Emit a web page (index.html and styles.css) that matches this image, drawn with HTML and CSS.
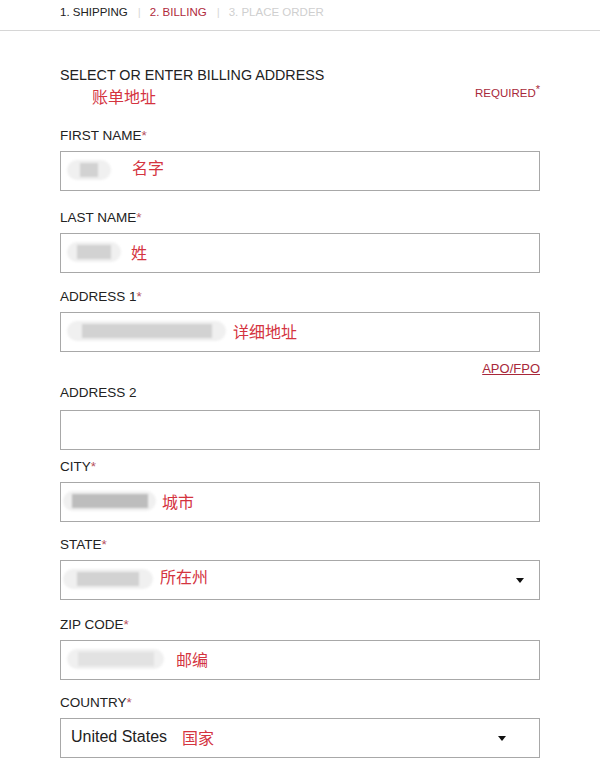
FILE: index.html
```html
<!DOCTYPE html>
<html lang="en">
<head>
    <meta charset="UTF-8">
    <meta name="viewport" content="width=device-width, initial-scale=1.0">
    <title>Billing</title>
    <link rel="stylesheet" href="styles.css">
</head>
<body>
    <div class="steps">
        <span class="step done">1. SHIPPING</span>
        <span class="sep">|</span>
        <span class="step active">2. BILLING</span>
        <span class="sep">|</span>
        <span class="step todo">3. PLACE ORDER</span>
    </div>

    <div class="form">
        <div class="heading">
            <div>
                <div class="title">SELECT OR ENTER BILLING ADDRESS</div>
                <div class="note title-note">账单地址</div>
            </div>
            <div class="required">REQUIRED<sup>*</sup></div>
        </div>

        <div class="field f-first">
            <label>FIRST NAME<span class="star">*</span></label>
            <div class="box">
                <span class="blob" style="width: 44px"><i style="width: 18px"></i></span>
                <span class="note up" style="margin-left: 21px">名字</span>
            </div>
        </div>

        <div class="field f-last">
            <label>LAST NAME<span class="star">*</span></label>
            <div class="box">
                <span class="blob" style="width: 54px"><i style="width: 34px"></i></span>
                <span class="note" style="margin-left: 10px">姓</span>
            </div>
        </div>

        <div class="field f-addr1">
            <label>ADDRESS 1<span class="star">*</span></label>
            <div class="box">
                <span class="blob" style="width: 159px"><i style="width: 130px"></i></span>
                <span class="note" style="margin-left: 7px">详细地址</span>
            </div>
            <a class="apo" href="#">APO/FPO</a>
        </div>

        <div class="field f-addr2">
            <label>ADDRESS 2</label>
            <div class="box"></div>
        </div>

        <div class="field f-city">
            <label>CITY<span class="star">*</span></label>
            <div class="box">
                <span class="blob dark wide" style="width: 93px"><i style="width: 76px"></i></span>
                <span class="note" style="margin-left: 6px">城市</span>
            </div>
        </div>

        <div class="field f-state">
            <label>STATE<span class="star">*</span></label>
            <div class="box select">
                <span class="blob wide" style="width: 90px"><i style="width: 62px"></i></span>
                <span class="note up" style="margin-left: 7px">所在州</span>
                <span class="arrow"></span>
            </div>
        </div>

        <div class="field f-zip">
            <label>ZIP CODE<span class="star">*</span></label>
            <div class="box">
                <span class="blob light" style="width: 97px"><i style="width: 76px"></i></span>
                <span class="note" style="margin-left: 12px">邮编</span>
            </div>
        </div>

        <div class="field f-country">
            <label>COUNTRY<span class="star">*</span></label>
            <div class="box select">
                <span class="value">United States</span>
                <span class="note" style="margin-left: 15px">国家</span>
                <span class="arrow country-arrow"></span>
            </div>
        </div>
    </div>
</body>
</html>
```

FILE: styles.css
```css
body {
    margin: 0;
    font-family: "Liberation Sans", Arial, sans-serif;
    color: #222;
    background-color: #fff;
}

.steps {
    display: flex;
    align-items: center;
    height: 31px;
    padding-left: 60px;
    border-bottom: 1px solid #d6d6d6;
    font-size: 11.5px;
    box-sizing: border-box;
    padding-bottom: 7px;
}

.step.done {
    color: #222;
}

.step.active {
    color: #b02a3c;
}

.step.todo {
    color: #cfcfcf;
}

.sep {
    color: #d8d8d8;
    margin: 0 9px 0 10px;
}

.form {
    padding: 35px 60px 0 60px;
}

.heading {
    display: flex;
    justify-content: space-between;
    align-items: flex-start;
}

.title {
    font-size: 14.3px;
    line-height: 18px;
    color: #222;
}

.note {
    font-family: "Noto Sans CJK SC", sans-serif;
    font-size: 16px;
    color: #d4343f;
    line-height: 20px;
}

.note.up {
    margin-bottom: 6px;
}

.title-note {
    margin-left: 32px;
    margin-top: 2px;
}

.required {
    font-size: 11.5px;
    color: #a8283a;
    margin-top: 16px;
}

.required sup {
    font-size: 11px;
    position: relative;
    top: 1px;
}

.field {
    display: flex;
    flex-direction: column;
}

.field label {
    font-size: 13.5px;
    line-height: 16px;
    margin-bottom: 7px;
}

.star {
    color: #b5505c;
}

.f-first { margin-top: 22px; }
.f-last { margin-top: 19px; }
.f-addr1 { margin-top: 16px; }
.f-addr2 { margin-top: 9px; }
.f-addr2 label { margin-bottom: 9px; }
.f-city { margin-top: 9px; }
.f-state { margin-top: 15px; }
.f-zip { margin-top: 17px; }
.f-country { margin-top: 15px; }

.box {
    display: flex;
    align-items: center;
    height: 40px;
    border: 1px solid #a8a8a8;
    box-sizing: border-box;
    padding: 0 0 3px 6px;
}

.blob {
    display: flex;
    align-items: center;
    justify-content: center;
    height: 20px;
    border-radius: 10px;
    background-color: #f0f0f0;
    filter: blur(1px);
}

.blob.wide {
    margin-left: -4px;
}

.blob i {
    display: block;
    height: 14px;
    background-color: #d2d2d2;
}

.blob.dark i {
    background-color: #bdbdbd;
}

.blob.light i {
    background-color: #e2e2e2;
}

.select {
    position: relative;
}

.arrow {
    position: absolute;
    right: 15px;
    top: 17px;
    width: 0;
    height: 0;
    border-left: 4px solid transparent;
    border-right: 4px solid transparent;
    border-top: 5px solid #111;
}

.country-arrow {
    right: 33px;
}

.value {
    font-size: 16px;
    color: #222;
    margin-left: 4px;
}

.apo {
    align-self: flex-end;
    font-size: 13px;
    color: #a8283a;
    margin-top: 9px;
    line-height: 15px;
}
```
